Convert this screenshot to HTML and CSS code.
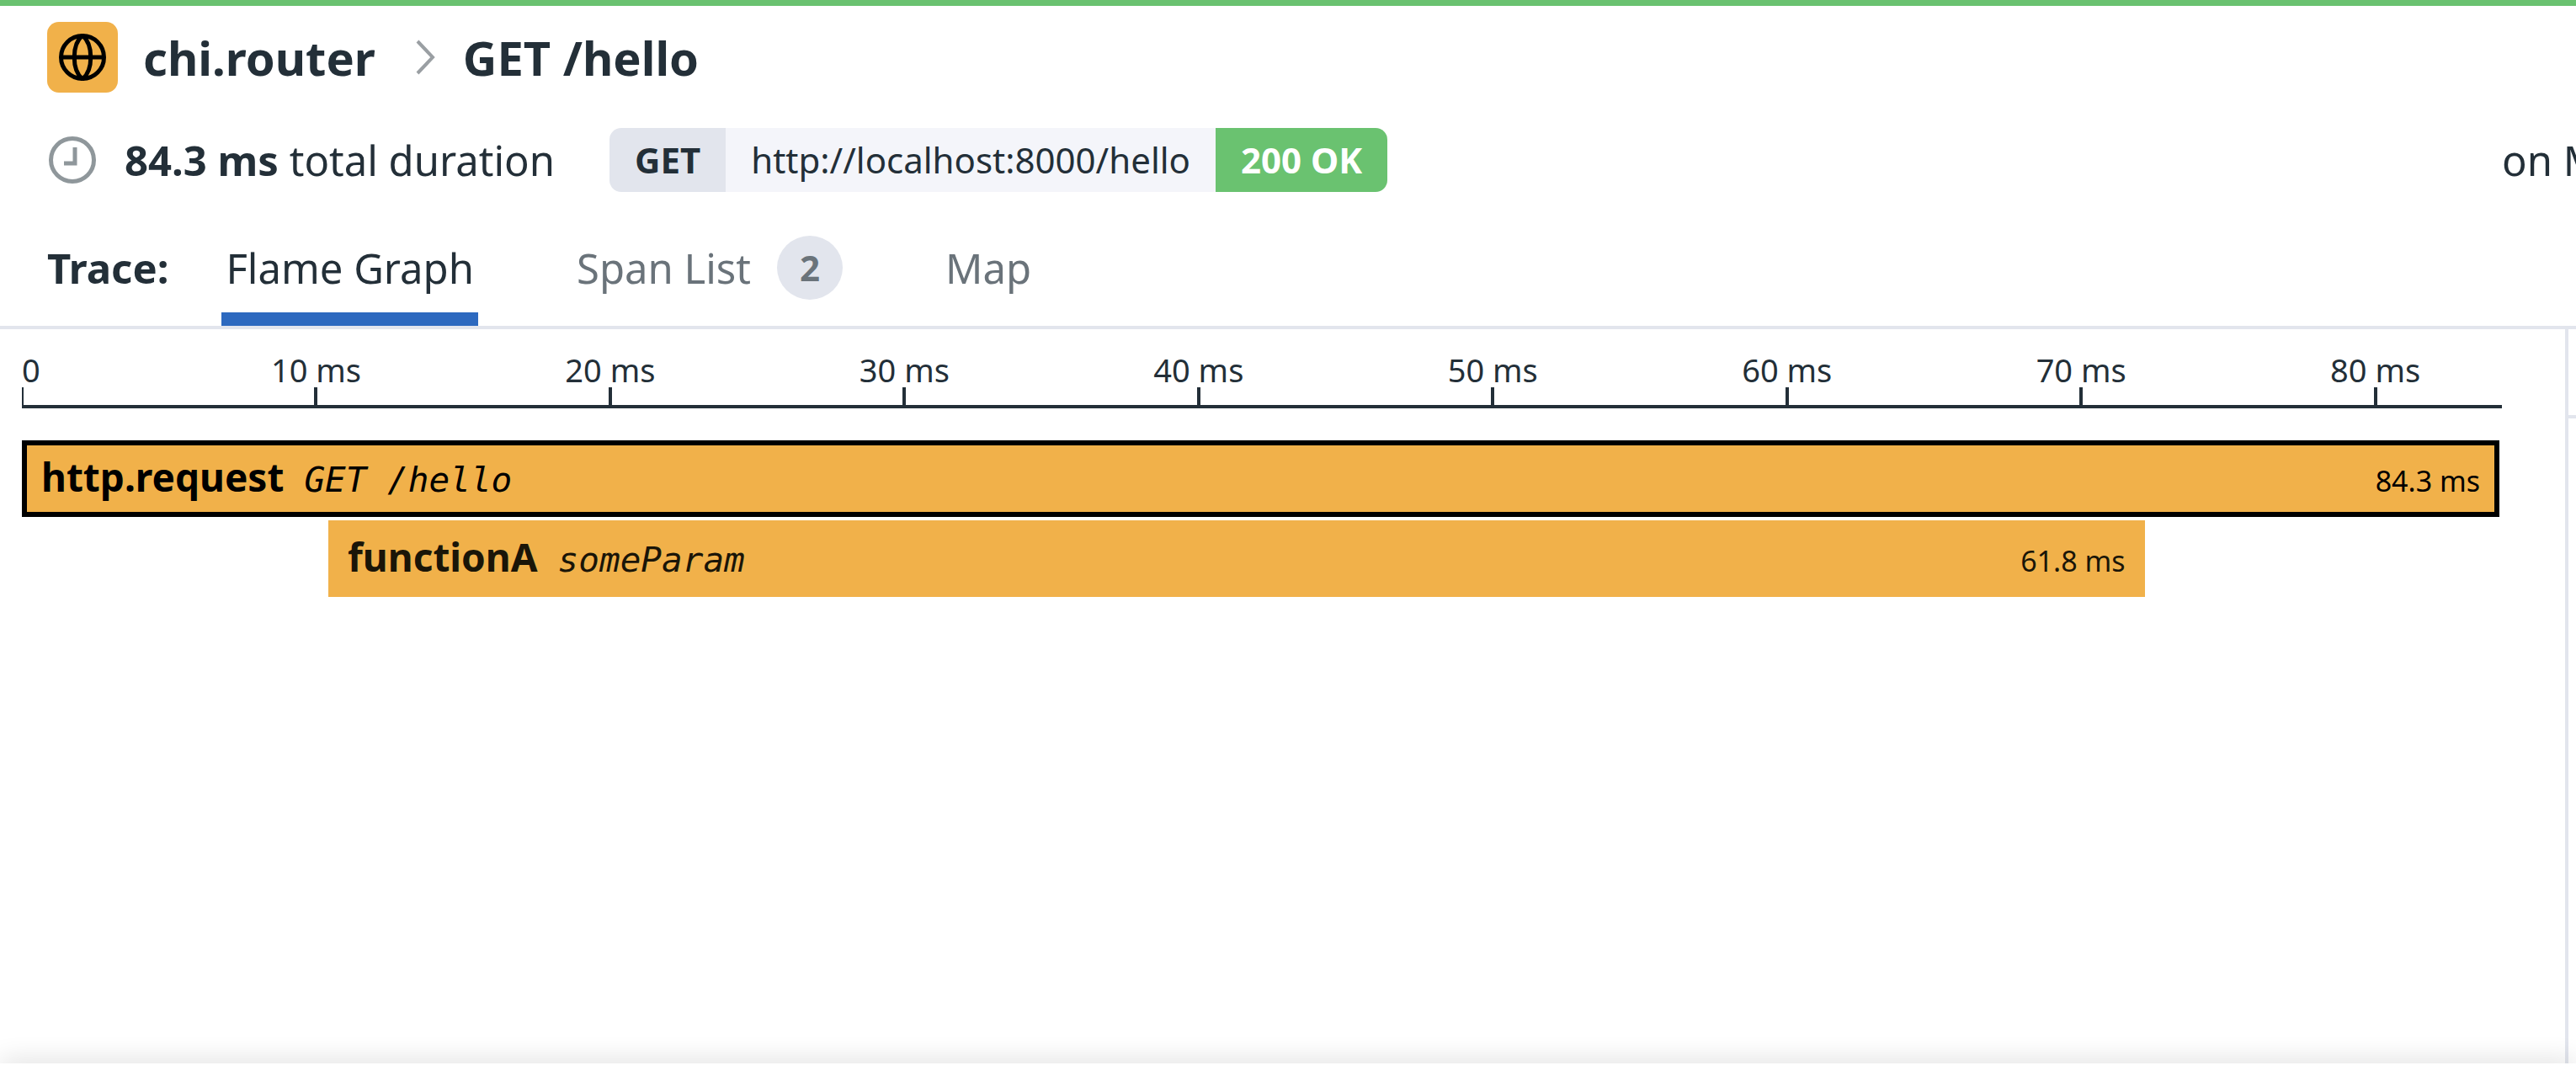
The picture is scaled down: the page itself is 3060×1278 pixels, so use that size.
FILE: index.html
```html
<!DOCTYPE html>
<html lang="en">
<head>
<meta charset="utf-8">
<title>chi.router GET /hello</title>
<link rel="stylesheet" href="styles.css">
</head>
<body>
<header class="header">
  <h1 class="title">
    <span class="service-icon">
      <svg width="60" height="60" viewBox="0 0 60 60" fill="none" stroke="#000" stroke-width="5" aria-hidden="true">
        <circle cx="30" cy="30" r="25.5"/>
        <path d="M4 30H56M30 4C17 15 17 45 30 56M30 4C43 15 43 45 30 56"/>
      </svg>
    </span>
    <span>chi.router</span>
    <svg class="chevron" width="24" height="44" viewBox="0 0 24 44" fill="none" stroke="#9a9fa3" stroke-width="4" aria-hidden="true"><path d="M2 3L20 22L2 41"/></svg>
    <span>GET /hello</span>
  </h1>
  <div class="summary">
    <svg class="clock" width="60" height="60" viewBox="0 0 60 60" fill="none" stroke="#8f979b" stroke-width="5" aria-hidden="true"><circle cx="30" cy="30" r="25.5"/><path d="M33 15V34H20"/></svg>
    <p class="duration"><strong>84.3 ms</strong> total duration</p>
    <div class="request">
      <span class="method">GET</span>
      <span class="url">http://localhost:8000/hello</span>
      <span class="status">200 OK</span>
    </div>
    <p class="date">on M</p>
  </div>
  <nav class="tabs">
    <span class="tabs-label">Trace:</span>
    <a class="tab active" href="#flame">Flame Graph</a>
    <a class="tab" href="#spans">Span List <span class="count">2</span></a>
    <a class="tab" href="#map">Map</a>
  </nav>
</header>
<main class="content">
  <section class="graph" id="flame">
    <div class="axis">
      <div class="tick"><div class="mark"><span>0</span></div></div>
      <div class="tick"><div class="mark"><span>10 ms</span></div></div>
      <div class="tick"><div class="mark"><span>20 ms</span></div></div>
      <div class="tick"><div class="mark"><span>30 ms</span></div></div>
      <div class="tick"><div class="mark"><span>40 ms</span></div></div>
      <div class="tick"><div class="mark"><span>50 ms</span></div></div>
      <div class="tick"><div class="mark"><span>60 ms</span></div></div>
      <div class="tick"><div class="mark"><span>70 ms</span></div></div>
      <div class="tick"><div class="mark"><span>80 ms</span></div></div>
    </div>
    <div class="spans">
      <div class="span selected" style="width:100%"><b class="name">http.request</b><i class="resource">GET /hello</i><span class="time">84.3 ms</span></div>
      <div class="span" style="margin-left:12.37%;width:73.31%"><b class="name">functionA</b><i class="resource">someParam</i><span class="time">61.8 ms</span></div>
    </div>
  </section>
  <aside class="side"><div class="side-head"></div></aside>
</main>
<footer class="drawer"></footer>
</body>
</html>
```
FILE: styles.css
```css
* { box-sizing: border-box; }

body {
  margin: 0;
  min-height: 100vh;
  display: flex;
  flex-direction: column;
  overflow-x: hidden;
  background: #fff;
  color: #232f38;
  font-family: "Noto Sans", sans-serif;
  font-size: 49px;
}

p, h1 { margin: 0; }

.header {
  border-top: 7px solid #6ac270;
  border-bottom: 4px solid #e2e5ed;
  padding: 19px 0 0 56px;
}

.title {
  display: flex;
  align-items: center;
  height: 84px;
  font-size: 56px;
  line-height: 84px;
  font-weight: 700;
}

.service-icon {
  display: flex;
  align-items: center;
  justify-content: center;
  width: 84px;
  height: 84px;
  margin-right: 30px;
  border-radius: 14px;
  background: #f1b14a;
}

.chevron { margin: 0 32px 0 48px; }

.summary {
  display: flex;
  align-items: center;
  height: 76px;
  margin-top: 42px;
  white-space: nowrap;
}

.clock { margin-right: 32px; }

.request {
  display: flex;
  margin-left: 65px;
  border-radius: 14px;
  overflow: hidden;
  font-size: 42px;
  line-height: 76px;
}

.request span { padding: 0 30px; }
.method { background: #e2e5ed; font-weight: 700; }
.url { background: #f4f5fa; }
.status { background: #6ac270; color: #fff; font-weight: 700; }

.date {
  width: 88px;
  margin-left: auto;
  overflow: hidden;
}

.tabs {
  display: flex;
  height: 143px;
  margin-top: 16px;
  padding-top: 5px;
  line-height: 138px;
}

.tabs-label { margin-right: 63px; font-weight: 700; }

.tab {
  display: flex;
  align-items: center;
  margin-right: 112px;
  padding: 0 5px;
  color: #6a737a;
  text-decoration: none;
}

.active {
  color: #232f38;
  box-shadow: inset 0 -16px #2d69bf;
}

.count {
  width: 78px;
  height: 76px;
  margin-left: 31px;
  border-radius: 50%;
  background: #e2e5ed;
  font-size: 42px;
  line-height: 76px;
  font-weight: 700;
  text-align: center;
}

.content {
  flex: 1;
  display: flex;
}

.graph {
  flex: 1;
  padding: 28px 75px 0 26px;
}

.axis {
  display: flex;
  border-bottom: 4px solid #232f38;
  font-size: 38px;
  line-height: 41px;
}

.tick { flex: 0 0 calc(100% * 10 / 84.3); }

.mark {
  display: flex;
  flex-direction: column;
  align-items: center;
  width: 4px;
  margin-left: -2px;
  white-space: nowrap;
}

.mark::after {
  content: "";
  width: 4px;
  height: 21px;
  background: #232f38;
}

.tick:first-child .mark { align-items: flex-start; margin-left: 0; }
.tick:first-child .mark::after { width: 2px; }

.spans {
  display: flex;
  flex-direction: column;
  gap: 4px;
  margin: 38px 3px 0 0;
}

.span {
  display: flex;
  align-items: baseline;
  height: 91px;
  padding: 0 23px;
  background: #f1b14a;
  color: #1a1508;
  line-height: 86px;
  white-space: nowrap;
}

.selected {
  color: #000;
  box-shadow: inset 0 0 0 6px #000;
}

.name { margin-right: 24px; font-size: 46px; }

.resource { font: italic 41px "DejaVu Sans Mono", monospace; }

.time { margin-left: auto; font-size: 34px; }

.side {
  width: 13px;
  border-left: 4px solid #e2e5ed;
}

.side-head {
  height: 106px;
  border-bottom: 4px solid #e2e5ed;
}

.drawer {
  position: relative;
  height: 15px;
  background: #fff;
  box-shadow: 0 0 32px rgba(0, 0, 0, 0.2);
}
```
